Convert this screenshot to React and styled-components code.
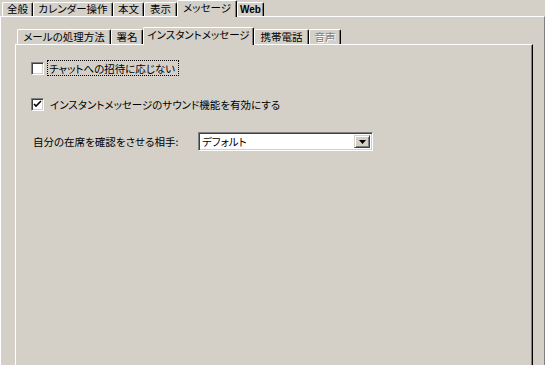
import React from "react";
import styled, { createGlobalStyle } from "styled-components";

const Global = createGlobalStyle`
  html, body { margin: 0; padding: 0; background: #d4d0c8; }
  body {
    font-family: "Noto Sans CJK JP", "Noto Sans", sans-serif;
    font-size: 10.5px;
    color: #000;
    font-feature-settings: "palt" 1;
  }
`;

const Window = styled.div`
  width: 545px;
  height: 365px;
  overflow: hidden;
  background: #d4d0c8;
  display: flex;
  flex-direction: column;
`;

const TabStrip = styled.div`
  display: flex;
  align-items: flex-end;
  height: ${(p) => p.$h}px;
  padding-left: ${(p) => p.$pl}px;
  position: relative;
  z-index: 2;
`;

const Tab = styled.div`
  box-sizing: border-box;
  width: ${(p) => p.$w}px;
  height: ${(p) => (p.$active ? p.$h + 3 : p.$h)}px;
  margin-bottom: ${(p) => (p.$active ? -1 : 0)}px;
  display: flex;
  align-items: center;
  justify-content: center;
  padding-bottom: ${(p) => (p.$active ? 2 : 0)}px;
  background: #d4d0c8;
  border-top: 1px solid #fff;
  border-left: 1px solid #fff;
  border-right: 1px solid #000;
  box-shadow: inset -1px 0 0 #808080;
  border-top-left-radius: 2px;
  border-top-right-radius: 2px;
  white-space: nowrap;
  line-height: 1;
  font-family: ${(p) => (p.$latin ? '"Liberation Sans", sans-serif' : "inherit")};
  font-size: ${(p) => (p.$latin ? 10 : 10.5)}px;
  color: ${(p) => (p.$disabled ? "#808080" : "#000")};
  text-shadow: ${(p) => (p.$disabled ? "1px 1px 0 #fff" : "none")};
  font-weight: ${(p) => (p.$latin ? 700 : 400)};
`;

const OuterPanel = styled.div`
  flex: 1;
  border-top: 1px solid #fff;
  border-left: 1px solid #fff;
  border-right: 1px solid #808080;
  padding: 10px 11px 0 14px;
  display: flex;
  flex-direction: column;
`;

const InnerPanel = styled.div`
  flex: 1;
  border-top: 1px solid #fff;
  border-left: 1px solid #fff;
  border-right: 1px solid #000;
  box-shadow: inset -1px 0 0 #808080;
  padding: 15px 15px 0 15px;
  display: flex;
  flex-direction: column;
  gap: 20px;
`;

const Row = styled.div`
  display: flex;
  align-items: center;
  height: 16px;
  gap: 3px;
`;

const Box = styled.span`
  box-sizing: border-box;
  width: 13px;
  height: 13px;
  background: #fff;
  border-top: 1px solid #808080;
  border-left: 1px solid #808080;
  border-right: 1px solid #fff;
  border-bottom: 1px solid #fff;
  box-shadow: inset 1px 1px 0 #404040, inset -1px -1px 0 #d4d0c8;
  display: flex;
  align-items: center;
  justify-content: center;
`;

const Label = styled.span`
  box-sizing: border-box;
  height: 16px;
  display: flex;
  align-items: center;
  padding: 0 4px 0 ${(p) => (p.$focus ? 2 : 3)}px;
  outline: ${(p) => (p.$focus ? "1px dotted #000" : "none")};
  outline-offset: -1px;
  white-space: nowrap;
`;

const SelectRow = styled.div`
  display: flex;
  align-items: center;
  height: 19px;
  padding-left: 2px;
`;

const FieldLabel = styled.span`
  width: 165px;
  white-space: nowrap;
`;

const Select = styled.div`
  box-sizing: border-box;
  width: 175px;
  height: 19px;
  background: #fff;
  border-top: 1px solid #808080;
  border-left: 1px solid #808080;
  border-right: 1px solid #fff;
  border-bottom: 1px solid #fff;
  box-shadow: inset 1px 1px 0 #404040, inset -1px -1px 0 #d4d0c8;
  display: flex;
  align-items: center;
  padding: 2px;
`;

const SelectText = styled.span`
  flex: 1;
  padding-left: 1px;
`;

const DropButton = styled.span`
  box-sizing: border-box;
  width: 16px;
  height: 13px;
  background: #d4d0c8;
  border-top: 1px solid #d4d0c8;
  border-left: 1px solid #d4d0c8;
  border-right: 1px solid #404040;
  border-bottom: 1px solid #404040;
  box-shadow: inset 1px 1px 0 #fff, inset -1px -1px 0 #808080;
  display: flex;
  align-items: center;
  justify-content: center;
`;

const Check = () => (
  <svg width="9" height="9" viewBox="0 0 9 9">
    <path d="M1 4 L3 6 L8 1" stroke="#000" strokeWidth="1.6" fill="none" />
  </svg>
);

const Arrow = () => (
  <svg width="7" height="4" viewBox="0 0 7 4">
    <path d="M0 0 H7 L3.5 4 Z" fill="#000" />
  </svg>
);

const outerTabs = [
  { t: "全般", w: 31 },
  { t: "カレンダー操作", w: 80 },
  { t: "本文", w: 31 },
  { t: "表示", w: 33 },
  { t: "メッセージ", w: 60, active: true },
  { t: "Web", w: 27, latin: true },
];

const innerTabs = [
  { t: "メールの処理方法", w: 94 },
  { t: "署名", w: 32 },
  { t: "インスタントメッセージ", w: 111, active: true },
  { t: "携帯電話", w: 55 },
  { t: "音声", w: 32, disabled: true },
];

export default function App() {
  return (
    <>
      <Global />
      <Window>
        <TabStrip $h={16} $pl={2}>
          {outerTabs.map((x) => (
            <Tab key={x.t} $w={x.w} $h={14} $active={x.active} $latin={x.latin}>
              {x.t}
            </Tab>
          ))}
        </TabStrip>
        <OuterPanel>
          <TabStrip $h={17} $pl={2}>
            {innerTabs.map((x) => (
              <Tab key={x.t} $w={x.w} $h={15} $active={x.active} $disabled={x.disabled}>
                {x.t}
              </Tab>
            ))}
          </TabStrip>
          <InnerPanel>
            <Row>
              <Box />
              <Label $focus>チャットへの招待に応じない</Label>
            </Row>
            <Row>
              <Box>
                <Check />
              </Box>
              <Label>インスタントメッセージのサウンド機能を有効にする</Label>
            </Row>
            <SelectRow>
              <FieldLabel>自分の在席を確認をさせる相手:</FieldLabel>
              <Select>
                <SelectText>デフォルト</SelectText>
                <DropButton>
                  <Arrow />
                </DropButton>
              </Select>
            </SelectRow>
          </InnerPanel>
        </OuterPanel>
      </Window>
    </>
  );
}
